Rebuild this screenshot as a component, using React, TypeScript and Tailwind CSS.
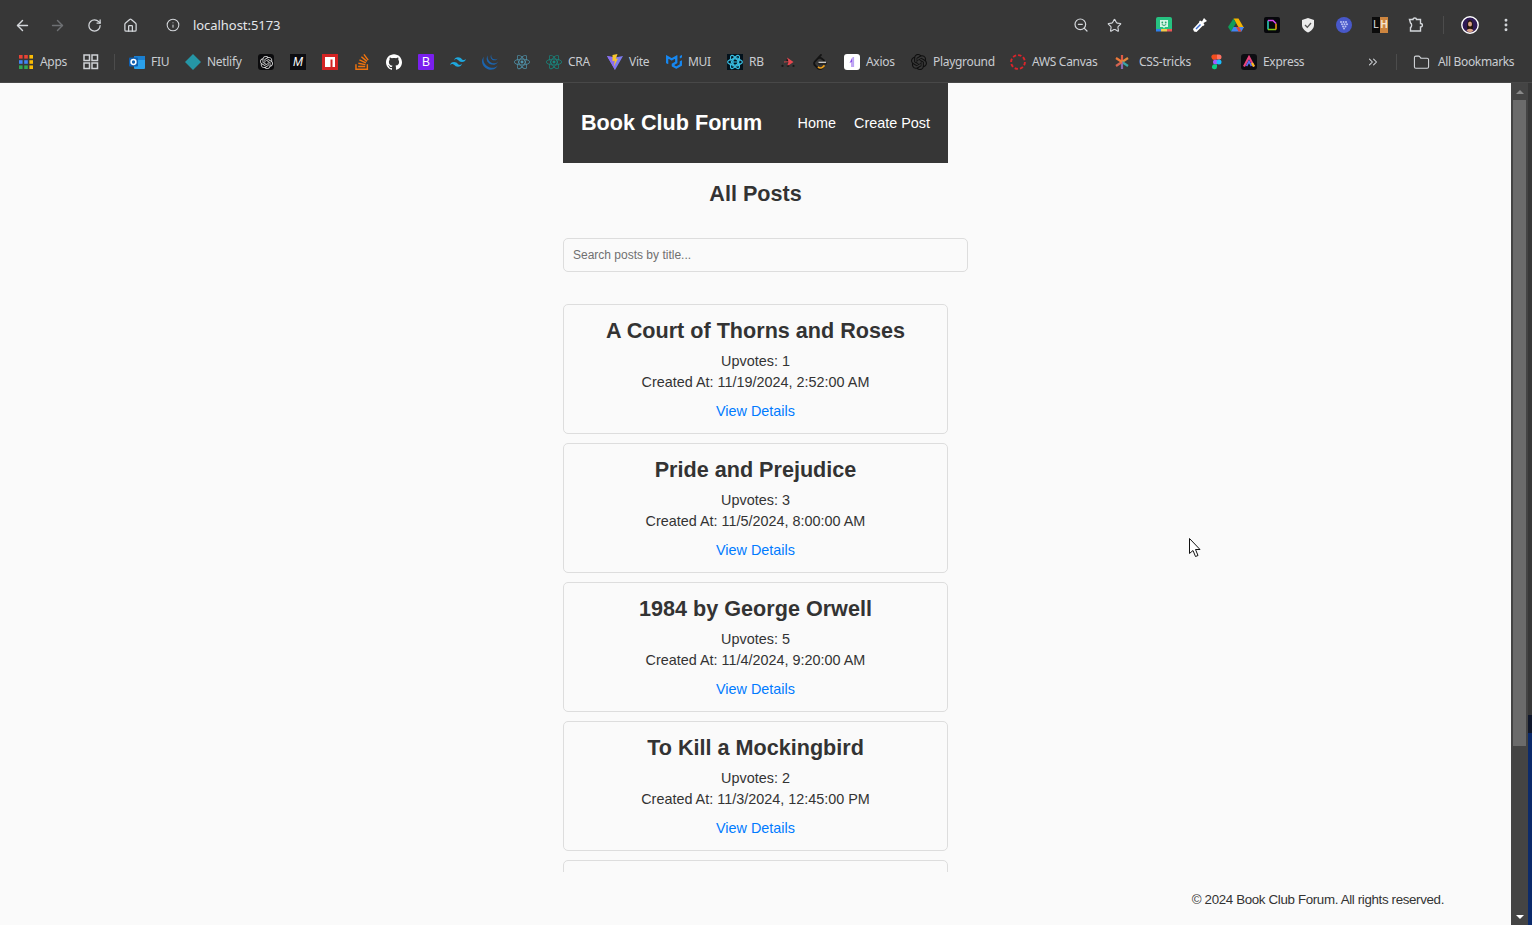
import type { ReactNode } from 'react';
import { ArrowLeft, ArrowRight, ChevronsRight, EllipsisVertical, Folder, House, Info, RotateCw, Star, ZoomOut } from 'lucide-react';
import { SiGithub, SiJquery, SiLeetcode, SiMui, SiOpenai, SiReact, SiStackoverflow, SiTailwindcss } from 'react-icons/si';

const posts = [
  { title: 'A Court of Thorns and Roses', upvotes: 1, created: '11/19/2024, 2:52:00 AM' },
  { title: 'Pride and Prejudice', upvotes: 3, created: '11/5/2024, 8:00:00 AM' },
  { title: '1984 by George Orwell', upvotes: 5, created: '11/4/2024, 9:20:00 AM' },
  { title: 'To Kill a Mockingbird', upvotes: 2, created: '11/3/2024, 12:45:00 PM' },
];

function Svg({ children }: { children: ReactNode }) {
  return (
    <svg width="16" height="16" viewBox="0 0 16 16" className="shrink-0 block">
      {children}
    </svg>
  );
}

function Tile({ className, children }: { className: string; children?: ReactNode }) {
  return (
    <span className={`w-4 h-4 shrink-0 flex items-center justify-center font-['Liberation_Sans',sans-serif] ${className}`}>
      {children}
    </span>
  );
}

function AppsIcon() {
  const colors = ['#ea4335', '#ea4335', '#fbbc04', '#4285f4', '#4285f4', '#fbbc04', '#34a853', '#34a853', '#fbbc04'];
  return (
    <Svg>
      {colors.map((c, i) => (
        <rect key={i} x={1 + (i % 3) * 5.2} y={1 + Math.floor(i / 3) * 5.2} width="3.6" height="3.6" fill={c} />
      ))}
    </Svg>
  );
}

function GridIcon() {
  return (
    <Svg>
      {[[1, 1], [9, 1], [1, 9], [9, 9]].map(([x, y]) => (
        <rect key={`${x}${y}`} x={x} y={y} width="5.5" height="5.5" fill="none" stroke="#cfd2d6" strokeWidth="1.5" />
      ))}
    </Svg>
  );
}

const bookmarks: { icon: ReactNode; label?: string; w?: string; cls?: string }[] = [
  { icon: <AppsIcon />, label: 'Apps', w: 'w-[27px]' },
  { icon: <GridIcon /> },
  { icon: <span className="w-px h-4 bg-[#4c4c4c]" />, cls: '-ml-px -mr-[2px]' },
  {
    icon: (
      <Svg>
        <rect x="5" y="2" width="11" height="13" rx="1" fill="#2aa0ea" />
        <rect x="5" y="2" width="11" height="4" fill="#1a7fd0" />
        <rect x="0" y="3.5" width="9" height="9" rx="1" fill="#0f5fb0" />
        <circle cx="4.5" cy="8" r="2.4" fill="none" stroke="#fff" strokeWidth="1.5" />
      </Svg>
    ),
    label: 'FIU',
    w: 'w-[18px]',
  },
  {
    icon: (
      <Svg>
        <path d="M8 0 L16 8 L8 16 L0 8 Z" fill="#2596a6" />
      </Svg>
    ),
    label: 'Netlify',
    w: 'w-[35px]',
  },
  {
    icon: (
      <Tile className="bg-[#0b0b0d] rounded-[3px]">
        <SiOpenai size={13} color="#d8d8d8" />
      </Tile>
    ),
  },
  {
    icon: (
      <Tile className="bg-[#0c0c10] text-white text-[12px] italic">
        M
      </Tile>
    ),
  },
  {
    icon: (
      <Svg>
        <rect width="16" height="16" fill="#d32323" />
        <path d="M3 3 H13 V13 H10.5 V5.5 H8.5 V13 H3 Z" fill="#fff" />
      </Svg>
    ),
  },
  { icon: <SiStackoverflow size={16} color="#f2740d" /> },
  { icon: <SiGithub size={16} color="#fff" /> },
  {
    icon: (
      <Tile className="bg-[#7a1fee] text-white text-[12px] rounded-[1px]">
        B
      </Tile>
    ),
  },
  { icon: <SiTailwindcss size={16} color="#1ea7dd" /> },
  { icon: <SiJquery size={16} color="#1b64ae" /> },
  { icon: <SiReact size={16} color="#4f93ab" /> },
  { icon: <SiReact size={16} color="#17887f" />, label: 'CRA', w: 'w-[23px]' },
  {
    icon: (
      <Svg>
        <path d="M0 2 L8 3.400 L16 2 L8 16 Z" fill="#7d7cf0" />
        <path d="M0 2 L8 3.400 L8 16 Z" fill="#8a6df2" />
        <path d="M5.500 1 L10.500 0 L8.800 5 L11 4.400 L6.800 12.500 L7.800 6.800 L5.500 7.300 Z" fill="#f7c52c" />
      </Svg>
    ),
    label: 'Vite',
    w: 'w-[21px]',
  },
  { icon: <SiMui size={16} color="#1687f0" />, label: 'MUI', w: 'w-[23px]' },
  {
    icon: (
      <Svg>
        <rect width="16" height="16" fill="#03121c" />
        <g fill="none" stroke="#38bde0" strokeWidth="1.200">
          <ellipse cx="8" cy="8" rx="7.400" ry="3" />
          <ellipse cx="8" cy="8" rx="7.400" ry="3" transform="rotate(60 8 8)" />
          <ellipse cx="8" cy="8" rx="7.400" ry="3" transform="rotate(120 8 8)" />
          <path d="M6 4 V12 H10 A2 2 0 0 0 10 8 H6 M10 8 A2 2 0 0 0 10 4 H6" />
        </g>
      </Svg>
    ),
    label: 'RB',
    w: 'w-[15px]',
  },
  {
    icon: (
      <Svg>
        <path d="M1 12 L2.500 10.500 L4 12 L2.500 13 Z M6 6 L7.500 5 L9 6 L7.500 7.500 Z" fill="#151515" />
        <path d="M7 3.500 L13.500 8 L7 12.500 L8.500 8 L4 8.500 L4 7.500 L8.500 7.500 Z" fill="#e5474f" />
        <path d="M12 12 L13.500 10.800 L15 12 L13.500 13 Z M6.500 12 L8 11 L9.500 12 L8 13 Z" fill="#151515" />
      </Svg>
    ),
  },
  {
    icon: (
      <span className="w-4 h-4 relative block">
        <SiLeetcode size={16} color="#141414" />
        <svg width="16" height="16" viewBox="0 0 16 16" className="absolute inset-0">
          <path d="M6.500 8.400 H14" stroke="#c6c6c6" strokeWidth="1.400" />
          <path d="M6 12.800 C7.500 14.300 9.500 14.300 11 12.800 L12.500 11.300" fill="none" stroke="#eea01b" strokeWidth="1.700" />
        </svg>
      </span>
    ),
  },
  {
    icon: (
      <Svg>
        <rect width="16" height="16" rx="3" fill="#fff" />
        <path d="M8.500 3 L8.500 13 L7.500 13 L7.500 8 L5.500 9 L7 6 Z" fill="#8a4fe8" />
        <path d="M9.500 3 V13" stroke="#b9a5f3" strokeWidth="1.200" />
      </Svg>
    ),
    label: 'Axios',
    w: 'w-[29px]',
  },
  { icon: <SiOpenai size={16} color="#0f0f0f" />, label: 'Playground', w: 'w-[61px]' },
  {
    icon: (
      <Svg>
        <circle cx="8" cy="8" r="6.900" fill="none" stroke="#d9252b" strokeWidth="1.900" strokeDasharray="3.400 2" />
      </Svg>
    ),
    label: 'AWS Canvas',
    w: 'w-[66px]',
  },
  {
    icon: (
      <Svg>
        <g strokeWidth="2.200" strokeLinecap="butt">
          <path d="M8 8 L8 1" stroke="#e05a44" />
          <path d="M8 8 L14 4" stroke="#e4893c" />
          <path d="M8 8 L14 12" stroke="#3aa6a6" />
          <path d="M8 8 L8 15" stroke="#8a6ab0" />
          <path d="M8 8 L2 12" stroke="#d66552" />
          <path d="M8 8 L2 4" stroke="#ee7a3a" />
        </g>
      </Svg>
    ),
    label: 'CSS-tricks',
    w: 'w-[54px] ml-[3px]',
  },
  {
    icon: (
      <Svg>
        <path d="M4 0.500 H8 V5.500 H6.500 A2.500 2.500 0 0 1 4 .5" fill="#f24e1e" />
        <path d="M8 0.500 H10 A2.500 2.500 0 0 1 10 5.500 H8 Z" fill="#ff7262" />
        <circle cx="6.500" cy="8" r="2.500" fill="#a259ff" />
        <circle cx="10" cy="8" r="2.500" fill="#1abcfe" />
        <path d="M6.500 10.500 H8 V13 A2.500 2.500 0 1 1 6.500 10.500" fill="#0acf83" />
      </Svg>
    ),
  },
  {
    icon: (
      <Svg>
        <rect width="16" height="16" rx="3" fill="#0d0d12" />
        <path d="M3 12.500 L8 3 L13 12.500" fill="none" stroke="#e8437c" strokeWidth="2.200" />
        <path d="M5.500 12 L8 7.500 L10.500 12" fill="none" stroke="#5d6df2" strokeWidth="1.600" />
        <path d="M11 9 L13 12.500" stroke="#f5c11c" strokeWidth="2.200" />
      </Svg>
    ),
    label: 'Express',
    w: 'w-[40px]',
  },
];

const extensions: ReactNode[] = [
  <Svg key="bitmoji">
    <rect width="16" height="14" rx="2" fill="#26c281" />
    <rect y="12" width="5" height="2.500" fill="#2f80ed" />
    <rect x="5" y="12" width="6" height="2.500" fill="#f2c94c" />
    <rect x="11" y="12" width="5" height="2.500" fill="#eb5757" />
    <path d="M4 3 H12 V10 H9 L8 11.500 L7 10 H4 Z" fill="#d6f5e6" />
    <circle cx="6.300" cy="5.500" r=".9" fill="#26a06c" />
    <circle cx="9.700" cy="5.500" r=".9" fill="#26a06c" />
    <path d="M5.800 7.500 Q8 9.500 10.200 7.500" fill="none" stroke="#26a06c" strokeWidth="1" />
  </Svg>,
  <Svg key="picker">
    <path d="M2 14.500 L1 12 L8 4.500 L11.500 8 L4.500 15 Z" fill="#fff" />
    <path d="M3.500 11.500 L8 7 L9 8 L4.500 12.500 Z" fill="#3d6fd6" />
    <path d="M8 3.500 L10 4.500 L12 1 L15 4 L11.500 6 L12.500 8 L11 9 L7 5 Z" fill="#fff" />
  </Svg>,
  <Svg key="drive">
    <path d="M5.500 1.500 H10.500 L16 11 H11 Z" fill="#f4b400" />
    <path d="M5.500 1.500 L8 6 L3 14.500 L0 10 Z" fill="#0f9d58" />
    <path d="M3 14.500 L5.500 10 H16 L13.500 14.500 Z" fill="#4285f4" />
    <path d="M5.500 10 H8 L10.500 14.500 H13.500 L11 10 Z" fill="#d9483b" />
  </Svg>,
  <Svg key="doc">
    <rect width="16" height="16" rx="2" fill="#06070b" />
    <path d="M4 3.500 V12.500" stroke="#2dd4bf" strokeWidth="1.500" />
    <path d="M4 12.500 H12" stroke="#84cc16" strokeWidth="1.500" />
    <path d="M12 12.500 V6.500" stroke="#f59e0b" strokeWidth="1.500" />
    <path d="M12 6.500 L9 3.500 H4" fill="none" stroke="#d946ef" strokeWidth="1.500" />
  </Svg>,
  <Svg key="shield">
    <path d="M8 1 L14 3 V8 C14 11.500 11 14 8 15.500 C5 14 2 11.500 2 8 V3 Z" fill="#ececec" />
    <path d="M5 8 L7.300 10.300 L11 6" fill="none" stroke="#555" strokeWidth="1.300" />
  </Svg>,
  <Svg key="purple">
    <circle cx="8" cy="8" r="8" fill="#4858c9" />
    {[[5, 5], [7.500, 5], [10, 5], [6, 7.200], [8.500, 7.200], [11, 7.200], [7, 9.400], [9.500, 9.400], [8, 11.500]].map(([x, y]) => (
      <circle key={`${x}-${y}`} cx={x} cy={y} r="1" fill="#b9c0f2" />
    ))}
  </Svg>,
  <span key="lh" className="w-4 h-4 flex text-[10px] leading-4 font-['Liberation_Sans',sans-serif] text-center">
    <span className="w-2 bg-[#0b0b0b] text-[#e6e6e6]">L</span>
    <span className="w-2 bg-[#cd853f] text-[#f7e6d0] font-bold">H</span>
  </span>,
];

function ToolButton({ className, children }: { className: string; children: ReactNode }) {
  return <div className={`h-[50px] flex items-center justify-center shrink-0 ${className}`}>{children}</div>;
}

function BrowserChrome() {
  return (
    <header className="bg-[#373737] border-b border-[#484848] shrink-0 h-[83px] font-['Noto_Sans',sans-serif]">
      <div className="h-[50px] flex items-center pl-1 pr-2">
        <ToolButton className="w-9"><ArrowLeft size={17} strokeWidth={2} color="#d4d7db" /></ToolButton>
        <ToolButton className="w-9 pr-[2px]"><ArrowRight size={17} strokeWidth={2} color="#6e7073" /></ToolButton>
        <ToolButton className="w-9"><RotateCw size={15} strokeWidth={2} color="#d4d7db" /></ToolButton>
        <ToolButton className="w-9"><House size={15} strokeWidth={2} color="#d4d7db" /></ToolButton>
        <ToolButton className="w-[18px] ml-4"><Info size={14} strokeWidth={1.8} color="#d4d7db" /></ToolButton>
        <span className="ml-[11px] mt-[1px] text-[13px] tracking-[-0.05px] text-[#e3e6ea]">localhost:5173</span>
        <div className="flex-1" />
        <ToolButton className="w-9"><ZoomOut size={16} strokeWidth={1.8} color="#d4d7db" /></ToolButton>
        <ToolButton className="w-[30px]"><Star size={15} strokeWidth={1.8} color="#d4d7db" /></ToolButton>
        <div className="w-[17px]" />
        {extensions.map((ext, i) => (
          <ToolButton key={i} className="w-9">{ext}</ToolButton>
        ))}
        <ToolButton className="w-9">
          <svg width="16" height="16" viewBox="0 0 16 16">
            <path d="M1.500 2.500 H5 C5 .5 8.500 .5 8.500 2.500 H12.500 V6.500 C15 6.500 15 10 12.500 10 V14 H2.500 V10.500 C4 10 4 6.500 2.500 6 Z" fill="none" stroke="#d4d7db" strokeWidth="1.400" />
          </svg>
        </ToolButton>
        <span className="w-px h-[18px] bg-[#4c4c4c] ml-[9px] mr-2" />
        <ToolButton className="w-9">
          <svg width="18" height="18" viewBox="0 0 18 18">
            <circle cx="9" cy="9" r="8.200" fill="#2f1a55" stroke="#fff" strokeWidth="1.400" />
            <path d="M6 13 C6 7 6.500 4 9 4 C11.500 4 12 7 12 13 Z" fill="#24160f" />
            <ellipse cx="9" cy="8" rx="2" ry="2.600" fill="#d9a183" />
            <path d="M5.500 15 C6.500 12 11.500 12 12.500 15 L9 16.500 Z" fill="#d9a183" />
          </svg>
        </ToolButton>
        <ToolButton className="w-9"><EllipsisVertical size={16} strokeWidth={2.4} color="#d4d7db" /></ToolButton>
      </div>
      <div className="h-6 flex items-center gap-4 pl-[18px] pr-[18px] text-[12px] leading-4 text-[#c9ccd1]">
        {bookmarks.map((b, i) => (
          <div key={i} className={`flex items-center gap-1.5 shrink-0 ${b.cls ?? ''}`}>
            {b.icon}
            {b.label && <span className={`whitespace-nowrap tracking-[-0.3px] ${b.w}`}>{b.label}</span>}
          </div>
        ))}
        <div className="ml-auto flex items-center">
          <ChevronsRight size={14} strokeWidth={1.8} color="#d4d7db" />
          <span className="w-px h-4 bg-[#4c4c4c] ml-4 mr-4" />
          <Folder size={17} strokeWidth={1.5} color="#d4d7db" />
          <span className="ml-2 w-[76px] whitespace-nowrap tracking-[-0.35px]">All Bookmarks</span>
        </div>
      </div>
    </header>
  );
}

function PostCard({ post }: { post: (typeof posts)[number] }) {
  return (
    <article className="h-[130px] mb-[9px] border border-[#ddd] rounded-[5px] text-center pt-[11px] shrink-0">
      <h3 className="text-[21.6px] leading-[30px] font-bold">{post.title}</h3>
      <p className="mt-[4px] leading-[22px]">Upvotes: {post.upvotes}</p>
      <p className="leading-[21px]">Created At: {post.created}</p>
      <a href="#" className="block mt-[7px] leading-[22px] text-[#007bff]">View Details</a>
    </article>
  );
}

export default function App() {
  return (
    <div className="w-[1532px] h-[925px] overflow-hidden flex flex-col relative">
      <BrowserChrome />
      <div className="flex-1 flex min-h-0">
        <div className="w-[1511px] bg-[#fafafa] text-[#333] text-[14.4px] flex flex-col font-['Liberation_Sans',sans-serif]">
          <main className="w-[385px] mx-auto h-[789px] flex flex-col shrink-0">
            <nav className="h-20 shrink-0 bg-[#363636] text-white flex items-center justify-between pl-[18px] pr-[18px]">
              <span className="text-[21.6px] font-bold">Book Club Forum</span>
              <div className="flex gap-[18px] pt-[2px]">
                <a href="#">Home</a>
                <a href="#">Create Post</a>
              </div>
            </nav>
            <h2 className="text-[21.6px] leading-[30px] font-bold text-center mt-[16px]">All Posts</h2>
            <input
              placeholder="Search posts by title..."
              className="mt-[29px] block w-[405px] h-[34px] shrink-0 px-[9px] text-[12px] border border-[#ddd] rounded-[5px] bg-[#fafafa] placeholder:text-[#707070] outline-none"
            />
            <div className="mt-8 flex flex-col flex-1 min-h-0 overflow-hidden">
              {posts.map((p) => (
                <PostCard key={p.title} post={p} />
              ))}
              <div className="h-[130px] border border-[#ddd] rounded-[5px] shrink-0" />
            </div>
          </main>
          <footer className="flex-1 flex items-center justify-end pr-[67px] text-[13.33px] tracking-[-0.35px] pt-[2px]">
            © 2024 Book Club Forum. All rights reserved.
          </footer>
        </div>
        <div className="w-[17px] bg-[#444] flex flex-col items-center shrink-0">
          <div className="h-[17px] flex items-center justify-center">
            <span className="w-0 h-0 border-x-[4px] border-x-transparent border-b-[4px] border-b-[#8a8a8a]" />
          </div>
          <div className="w-[13px] h-[646px] bg-[#6b6b6b]" />
          <div className="flex-1" />
          <div className="h-[17px] flex items-center justify-center">
            <span className="w-0 h-0 border-x-[4px] border-x-transparent border-t-[4px] border-t-white" />
          </div>
        </div>
        <div className="w-1 flex flex-col shrink-0">
          <div className="h-[632px] bg-[#373737]" />
          <div className="h-[18px] bg-[#10182c]" />
          <div className="flex-1 bg-[#0b2a6b]" />
        </div>
      </div>
      <svg width="14" height="20" viewBox="0 0 14 20" className="absolute left-[1189px] top-[538px]">
        <path d="M.5 .5 V15.500 L4 12.500 L6.500 18.500 L9 17.500 L6.500 11.500 H11 Z" fill="#fff" stroke="#111" strokeWidth="1" />
      </svg>
    </div>
  );
}
